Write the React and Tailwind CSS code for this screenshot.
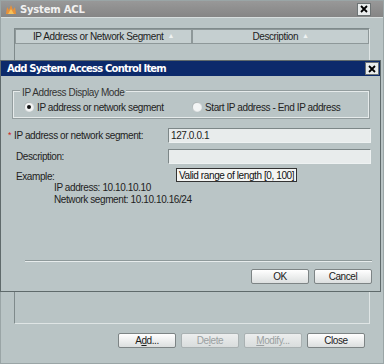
import React from "react";

const font = { fontFamily: '"Liberation Sans", Arial, sans-serif' };

function CloseBtn() {
  return (
    <div className="w-[14px] h-[13px] bg-[#e9ecec] border border-[#6d7475] flex items-center justify-center">
      <svg width="8" height="8" viewBox="0 0 8 8">
        <path d="M1 1 L7 7 M7 1 L1 7" stroke="#000" strokeWidth="1.8" />
      </svg>
    </div>
  );
}

function Btn({ children, disabled, w = "w-[58px]" }) {
  return (
    <div
      className={`${w} h-[15px] flex items-center justify-center rounded-[2px] border text-[10px] ${
        disabled
          ? "border-[#a9b1b2] bg-gradient-to-b from-[#eceeee] to-[#d9dddd] text-[#9aa0a1]"
          : "border-[#7d8485] bg-gradient-to-b from-[#ffffff] to-[#dcdfdf] text-[#1b1b1b]"
      }`}
    >
      {children}
    </div>
  );
}

function Radio({ checked }) {
  return (
    <div className="w-[10px] h-[10px] rounded-full bg-gradient-to-br from-[#9aa3a4] to-[#ffffff] flex items-center justify-center">
      <div className="w-[8px] h-[8px] rounded-full bg-[#f3f5f5] flex items-center justify-center">
        {checked && <div className="w-[4px] h-[4px] rounded-full bg-[#111]" />}
      </div>
    </div>
  );
}

export default function App() {
  return (
    <div className="w-[384px] h-[364px] bg-[#c9d2d3] relative overflow-hidden tracking-[-0.4px]" style={font}>
      {/* Outer window */}
      <div className="w-[384px] h-[364px] flex flex-col border border-[#9aa5a6]">
        <div className="h-[16px] bg-gradient-to-b from-[#989898] to-[#858585] flex items-center pl-[4px] pr-[12px] shrink-0">
          <svg width="12" height="11" viewBox="0 0 12 11" className="mr-[3px]">
            <path d="M1 10 L2 3 L4 6 L6 1 L8 6 L10 3 L11 10 Z" fill="#e8913a" />
            <path d="M3 10 L6 5 L9 10 Z" fill="#f6c25a" />
          </svg>
          <span className="font-bold text-[#f1f1f1] tracking-[-0.2px]" style={{ fontFamily: '"DejaVu Sans", sans-serif', fontSize: "10px" }}>
            System ACL
          </span>
          <div className="ml-auto">
            <CloseBtn />
          </div>
        </div>
        <div className="flex-1 bg-[#b9c4c5] border-t border-[#d7dede] px-[13px] pt-[10px] flex flex-col">
          <div className="h-[296px] border border-[#7f8a8b] border-r-[#dfe5e5] border-b-[#dfe5e5] flex flex-col">
            <div className="flex h-[15px] text-[10px] text-[#1d1d1d]">
              <div className="w-[177px] border border-[#8e9899] bg-[#c5cfd0] flex items-center justify-center gap-[4px]">
                IP Address or Network Segment <span className="text-[#eef2f2] text-[7px]">▲</span>
              </div>
              <div className="flex-1 border border-[#8e9899] bg-[#c5cfd0] flex items-center justify-center gap-[4px]">
                Description <span className="text-[#eef2f2] text-[7px]">▲</span>
              </div>
            </div>
          </div>
          <div className="flex justify-end gap-[5px] pr-[5px] mt-[9px]">
            <Btn><span>A<u>d</u>d...</span></Btn>
            <Btn disabled><span>De<u>l</u>ete</span></Btn>
            <Btn disabled><span><u>M</u>odify...</span></Btn>
            <Btn><span>Close</span></Btn>
          </div>
        </div>
      </div>

      {/* Modal dialog */}
      <div className="absolute left-0 top-[60px] w-[381px] h-[232px] bg-[#bac5c6] border border-[#5f6a6b] flex flex-col">
        <div className="h-[15px] bg-[#0c2a6b] flex items-center pl-[6px] pr-[1px] shrink-0">
          <span className="text-white font-bold" style={{ fontFamily: '"DejaVu Sans", sans-serif', fontSize: "10px", letterSpacing: "-0.8px" }}>
            Add System Access Control Item
          </span>
          <div className="ml-auto">
            <CloseBtn />
          </div>
        </div>
        <div className="flex-1 flex flex-col px-[10px] text-[10px] text-[#222]">
          {/* group box */}
          <div className="relative mt-[15px] h-[27px] border border-[#e6ebeb] outline outline-1 outline-[#939d9e] ml-[2px] mr-[1px] flex items-center">
            <span className="absolute left-[6px] -top-[7px] bg-[#bac5c6] px-[2px] text-[#333]">IP Address Display Mode</span>
            <div className="w-[178px] flex items-center gap-[3px] pl-[10px] mt-[5px]">
              <Radio checked />
              <span>IP address or network segment</span>
            </div>
            <div className="flex items-center gap-[3px] mt-[5px]">
              <Radio />
              <span>Start IP address - End IP address</span>
            </div>
          </div>

          {/* fields */}
          <div className="flex items-center mt-[10px] h-[15px]">
            <div className="w-[157px] flex items-center">
              <span className="text-[#d02020] text-[9px] -ml-[3px] mr-[3px]">*</span>
              <span>IP address or network segment:</span>
            </div>
            <div className="flex-1 h-[15px] bg-[#e8ecec] border border-[#7d8788] border-r-[#eef2f2] border-b-[#eef2f2] flex items-center pl-[2px] mr-[-1px]">
              127.0.0.1
            </div>
          </div>
          <div className="flex items-center mt-[6px] h-[15px]">
            <div className="w-[157px] pl-[5px]">Description:</div>
            <div className="flex-1 h-[15px] bg-[#e8ecec] border border-[#7d8788] border-r-[#eef2f2] border-b-[#eef2f2] mr-[-1px]" />
          </div>
          <div className="relative flex items-center mt-[5px] h-[14px]">
            <div className="pl-[5px]">Example:</div>
            <div className="absolute left-[165px] top-[-1px] h-[14px] px-[2px] bg-[#f4f5f3] border border-[#333] flex items-center text-[#111]">
              Valid range of length [0, 100]
            </div>
          </div>
          <div className="pl-[43px] mt-[-1px] leading-[12px]">
            <div>IP address: 10.10.10.10</div>
            <div>Network segment: 10.10.10.16/24</div>
          </div>
          <div className="mt-[54px] ml-[14px] mr-[-2px] h-[2px] border-t border-[#8f9a9b] border-b border-b-[#e7ecec]" />
          <div className="flex justify-end gap-[5px] mt-[7px] mr-[-2px]">
            <Btn><span>OK</span></Btn>
            <Btn><span>Cancel</span></Btn>
          </div>
        </div>
      </div>
    </div>
  );
}
